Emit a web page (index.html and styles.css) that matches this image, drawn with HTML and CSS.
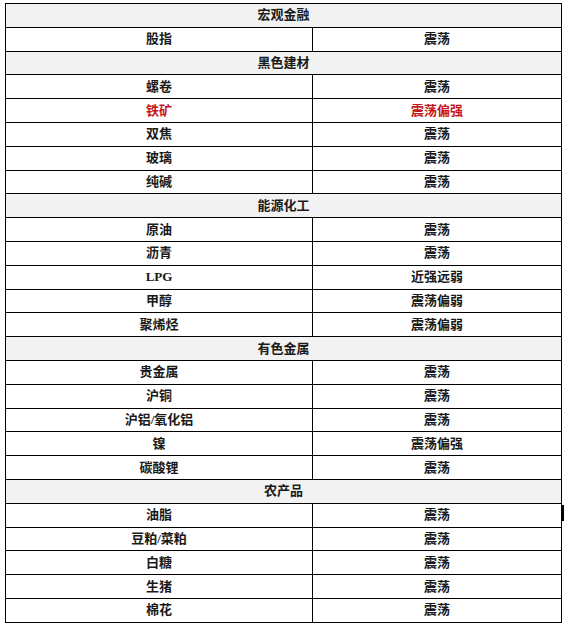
FILE: index.html
```html
<!DOCTYPE html>
<html lang="zh-CN">
<head>
<meta charset="utf-8">
<link rel="stylesheet" href="styles.css">
</head>
<body>
<div class="wrap">
<table class="grid">
<colgroup><col class="c-name"><col class="c-view"></colgroup>
<tr class="sec"><td colspan="2">宏观金融</td></tr>
<tr><td>股指</td><td>震荡</td></tr>
<tr class="sec"><td colspan="2">黑色建材</td></tr>
<tr><td>螺卷</td><td>震荡</td></tr>
<tr class="hot"><td>铁矿</td><td>震荡偏强</td></tr>
<tr><td>双焦</td><td>震荡</td></tr>
<tr><td>玻璃</td><td>震荡</td></tr>
<tr><td>纯碱</td><td>震荡</td></tr>
<tr class="sec"><td colspan="2">能源化工</td></tr>
<tr><td>原油</td><td>震荡</td></tr>
<tr><td>沥青</td><td>震荡</td></tr>
<tr><td>LPG</td><td>近强远弱</td></tr>
<tr><td>甲醇</td><td>震荡偏弱</td></tr>
<tr><td>聚烯烃</td><td>震荡偏弱</td></tr>
<tr class="sec"><td colspan="2">有色金属</td></tr>
<tr><td>贵金属</td><td>震荡</td></tr>
<tr><td>沪铜</td><td>震荡</td></tr>
<tr><td>沪铝/氧化铝</td><td>震荡</td></tr>
<tr><td>镍</td><td>震荡偏强</td></tr>
<tr><td>碳酸锂</td><td>震荡</td></tr>
<tr class="sec"><td colspan="2">农产品</td></tr>
<tr><td>油脂</td><td>震荡</td></tr>
<tr><td>豆粕/菜粕</td><td>震荡</td></tr>
<tr><td>白糖</td><td>震荡</td></tr>
<tr><td>生猪</td><td>震荡</td></tr>
<tr><td>棉花</td><td>震荡</td></tr>
</table>
<span class="caret"></span>
</div>
</body>
</html>
```

FILE: styles.css
```css
html, body {
  margin: 0;
  padding: 0;
  background: #ffffff;
}
.wrap {
  position: relative;
  padding: 3px 0 0 5px;
}
.grid {
  border-collapse: collapse;
  width: 556px;
  table-layout: fixed;
  font-family: "Liberation Serif", "Noto Sans CJK SC", serif;
  font-weight: bold;
  font-size: 13px;
  color: #1a1a1a;
}
.c-name {
  width: 307px;
}
.c-view {
  width: 249px;
}
.grid td {
  border: 1px solid #000;
  height: 22.8px;
  padding: 0;
  text-align: center;
  vertical-align: middle;
  line-height: 14px;
}
.grid .sec td {
  background: #f2f2f2;
}
.grid .hot td {
  color: #c4161c;
}
.caret {
  position: absolute;
  left: 562px;
  top: 505px;
  width: 2px;
  height: 16px;
  background: #000;
}
```
